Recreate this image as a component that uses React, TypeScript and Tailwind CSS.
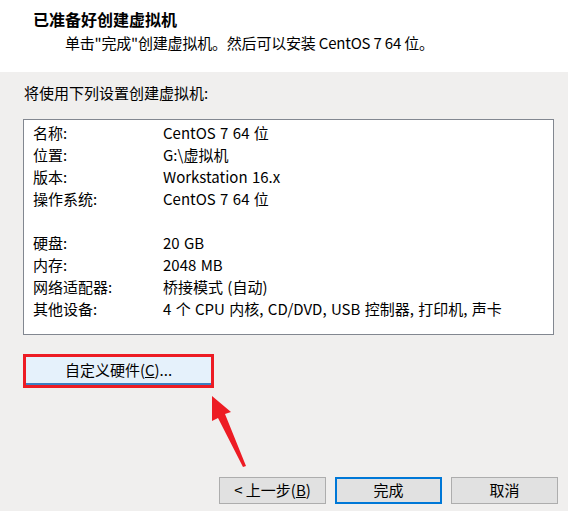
import React from 'react';

const font = { fontFamily: '"Noto Sans CJK SC", "Liberation Sans", sans-serif' };

const App: React.FC = () => {
    // settings listed in the summary box (empty row is a spacer)
    const rows = [
        { label: '名称:', value: 'CentOS 7 64 位' },
        { label: '位置:', value: 'G:\\虚拟机' },
        { label: '版本:', value: 'Workstation 16.x' },
        { label: '操作系统:', value: 'CentOS 7 64 位' },
        { label: '', value: '' },
        { label: '硬盘:', value: '20 GB' },
        { label: '内存:', value: '2048 MB' },
        { label: '网络适配器:', value: '桥接模式 (自动)' },
        { label: '其他设备:', value: '4 个 CPU 内核, CD/DVD, USB 控制器, 打印机, 声卡' },
    ];

    return (
        <div className="relative w-[568px] h-[511px] overflow-hidden bg-[#f0efee] text-[15px] text-black" style={font}>
            {/* Header */}
            <div className="h-[72px] bg-white pt-[9px] pl-[33px]">
                <div className="font-bold text-[16px] leading-[20px]">已准备好创建虚拟机</div>
                <div className="ml-[32px] mt-[4px] leading-[20px] tracking-[-0.2px]">单击"完成"创建虚拟机。然后可以安装 CentOS 7 64 位。</div>
            </div>

            <div className="px-[23px]">
                <div className="mt-[11px] leading-[20px] pl-[1px]">将使用下列设置创建虚拟机:</div>

                {/* Summary box */}
                <div className="mt-[16px] w-[531px] h-[216px] border border-[#828790] bg-white pt-[2px] pl-[9px]">
                    {rows.map((row, i) => (
                        <div key={i} className="flex h-[22px] items-center">
                            <span className="w-[130px]">{row.label}</span>
                            <span className="[word-spacing:1px]">{row.value}</span>
                        </div>
                    ))}
                </div>

                {/* Customize hardware button, highlighted */}
                <div className="mt-[19px] w-[191px] h-[34px] border-[3px] border-[#ed1c24]">
                    <div className="h-full bg-[#e5f1fb] border-b-2 border-[#3c7fc2] flex items-center justify-center">
                        <span>自定义硬件(<span className="underline">C</span>)...</span>
                    </div>
                </div>

                {/* Wizard buttons */}
                <div className="mt-[89px] flex justify-end gap-[9px] mr-[-13px]">
                    <button className="w-[107px] h-[27px] bg-[#e1e1e1] border border-[#adadad] flex items-center justify-center">
                        <span>&lt; 上一步(<span className="underline">B</span>)</span>
                    </button>
                    <button className="w-[107px] h-[27px] bg-[#e1e1e1] border-2 border-[#0078d7] flex items-center justify-center">
                        完成
                    </button>
                    <button className="w-[107px] h-[27px] bg-[#e1e1e1] border border-[#adadad] flex items-center justify-center">
                        取消
                    </button>
                </div>
            </div>

            {/* Red annotation arrow */}
            <svg className="absolute left-0 top-0 pointer-events-none" width="568" height="511">
                <polygon
                    points="212,396 231,412 225,414 246,466 243,467 218,418 212,421"
                    fill="#ed1c24"
                />
            </svg>
        </div>
    );
};

export default App;
